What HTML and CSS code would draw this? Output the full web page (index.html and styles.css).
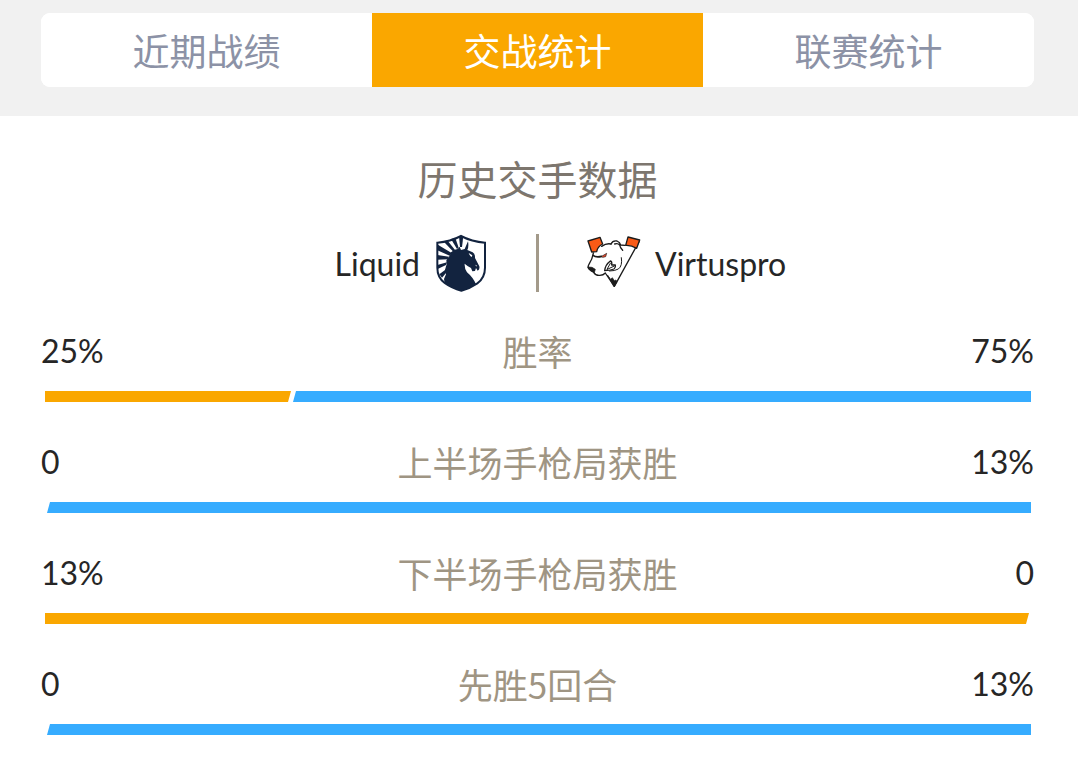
FILE: index.html
```html
<!DOCTYPE html>
<html lang="zh-CN">
<head>
    <meta charset="UTF-8">
    <meta name="viewport" content="width=device-width, initial-scale=1.0">
    <title>交战统计</title>
    <link rel="stylesheet" href="styles.css">
</head>
<body>

<nav class="header">
    <div class="tabs">
        <button class="tab" type="button">近期战绩</button>
        <button class="tab active" type="button">交战统计</button>
        <button class="tab" type="button">联赛统计</button>
    </div>
</nav>

<main class="content">
    <h1 class="title">历史交手数据</h1>

    <div class="teams">
        <div class="team home">
            <span>Liquid</span>
            <svg class="logo" viewBox="27 27 162 174" aria-hidden="true">
                <path d="M108 33 Q140 50 180 53 V128 Q180 158 157 175 Q135 190 109 197 Q81 190 59 174 Q37 157 37 128 V53 Q76 50 108 33Z" fill="#fff" stroke="#12233f" stroke-width="6"/>
                <g fill="#12233f">
                    <path d="M102 33 L115 33 L111 66 L105 66Z"/>
                    <path d="M78 42 L91 39 L101 68 L96 72Z"/>
                    <path d="M55 49 L68 47 L90 75 L85 80Z"/>
                    <path d="M37 58 L46 64 L80 84 L74 92 L37 76Z"/>
                    <path d="M37 90 L37 104 L68 103 L72 95Z"/>
                    <path d="M37 120 L38 132 L63 120 L66 112Z"/>
                    <path d="M43 148 L51 158 L65 142 L64 132Z"/>
                    <path d="M129 49 Q132 64 127 75 L143 82 Q151 87 150 99 L163 124 Q165 134 158 137 L153 129 L150 138 L142 139 L138 129 Q128 124 119 116 Q118 130 126 142 Q144 157 153 178 Q133 191 109 197 Q79 188 59 174 L57 162 L63 148 L60 134 L65 118 L64 106 L73 94 L78 82 L89 74 L98 72 L104 65 L108 75 L119 72Z"/>
                </g>
                <path d="M131 84 L142 91 L140 96 Q135 94 131 84Z" fill="#fff"/>
                <path d="M151 119 l4 2 -1 4z" fill="#fff"/>
            </svg>
        </div>
        <div class="divider"></div>
        <div class="team away">
            <svg class="logo" viewBox="36 27 162 174" aria-hidden="true">
                <g stroke="#1b1b1b" stroke-width="4" stroke-linejoin="round" stroke-linecap="round">
                    <path d="M55 81 L80 62 Q95 54 108 57 Q118 44 132 52 L152 60 L186 70 L118 183 L93 146 Q84 152 72 151 Q60 150 56 142 L41 131 Q37 126 43 116 Q52 103 55 81Z" fill="#fff" stroke="none"/>
                    <path d="M80 64 Q94 54 108 57 M55 84 Q52 103 43 116 Q37 125 41 131 L56 142 Q61 151 72 151 Q84 152 91 144 M192 50 L118 184 L93 147" fill="none"/>
                    <path d="M39 48 L75 37 L83 57 Q68 64 65 80 L50 81Z" fill="#f95a16"/>
                    <path d="M159 36 L194 45 L185 70 Q169 60 152 61Z" fill="#f95a16"/>
                    <path d="M108 57 Q113 46 126 48 Q135 52 137 60 L150 61 M119 57 Q129 54 134 60 Q135 68 143 76" fill="none"/>
                    <path d="M54 91 Q63 98 80 94" fill="none" stroke-width="5"/>
                    <path d="M80 94 L95 85 L92 95 L84 97Z" fill="#ef4a2c" stroke-width="2"/>
                    <path d="M139 98 Q143 123 130 132 Q120 138 103 138" fill="none" stroke-width="3"/>
                    <path d="M89 137 Q91 119 106 108 Q112 110 110 120 L121 120 Q123 127 117 132 Q104 137 89 137Z" fill="#fff"/>
                    <path d="M96 133 L106 115 M97 133 L118 123" fill="none" stroke-width="3"/>
                    <path d="M39 126 L51 127 L61 133 L58 143 L47 138Z" fill="#1b1b1b" stroke-width="2"/>
                    <path d="M98 151 L107 163 L112 158 L118 167 L123 165 L126 171 L118 185Z" fill="#1b1b1b" stroke-width="2"/>
                </g>
            </svg>
            <span>Virtuspro</span>
        </div>
    </div>

    <ul class="stats">
        <li class="stat">
            <div class="stat-text">
                <span class="value">25%</span>
                <span class="label">胜率</span>
                <span class="value right">75%</span>
            </div>
            <div class="bar">
                <div class="bar-left" style="width: 25%"></div>
                <div class="bar-right" style="width: 75%"></div>
            </div>
        </li>
        <li class="stat">
            <div class="stat-text">
                <span class="value">0</span>
                <span class="label">上半场手枪局获胜</span>
                <span class="value right">13%</span>
            </div>
            <div class="bar">
                <div class="bar-left" style="width: 0%"></div>
                <div class="bar-right" style="width: 100%"></div>
            </div>
        </li>
        <li class="stat">
            <div class="stat-text">
                <span class="value">13%</span>
                <span class="label">下半场手枪局获胜</span>
                <span class="value right">0</span>
            </div>
            <div class="bar">
                <div class="bar-left" style="width: 100%"></div>
                <div class="bar-right" style="width: 0%"></div>
            </div>
        </li>
        <li class="stat">
            <div class="stat-text">
                <span class="value">0</span>
                <span class="label">先胜5回合</span>
                <span class="value right">13%</span>
            </div>
            <div class="bar">
                <div class="bar-left" style="width: 0%"></div>
                <div class="bar-right" style="width: 100%"></div>
            </div>
        </li>
    </ul>
</main>

</body>
</html>
```
FILE: styles.css
```css
* {
    box-sizing: border-box;
}

body {
    margin: 0;
    background-color: #fff;
    color: #262626;
    font-family: Lato, "Noto Sans CJK SC", sans-serif;
    font-size: 32px;
}

.header {
    padding: 13px 44px 29px 41px;
    background-color: #f1f1f1;
}

.tabs {
    display: grid;
    grid-template-columns: repeat(3, 1fr);
    border-radius: 9px;
    overflow: hidden;
    background-color: #fff;
}

.tab {
    height: 74px;
    padding: 0;
    border: none;
    background-color: #fff;
    color: #8c92a6;
    font-family: "Noto Sans CJK SC", sans-serif;
    font-size: 37px;
    cursor: pointer;
}

.tab.active {
    background-color: #faa700;
    color: #fff;
}

.content {
    padding: 40px 44px 40px 41px;
}

.title {
    margin: 0 0 30px;
    color: #7d766e;
    font-size: 40px;
    font-weight: 400;
    line-height: 48px;
    text-align: center;
}

.teams {
    display: grid;
    grid-template-columns: 1fr 3px 1fr;
    column-gap: 48px;
    align-items: center;
}

.team {
    display: flex;
    align-items: center;
    gap: 14px;
}

.home {
    justify-content: flex-end;
}

.logo {
    width: 54px;
    height: 58px;
}

.divider {
    height: 58px;
    background-color: #a39a8a;
}

.stats {
    display: grid;
    gap: 40px;
    margin: 39px 0 0;
    padding: 0;
    list-style: none;
}

.stat-text {
    display: grid;
    grid-template-columns: 1fr auto 1fr;
    align-items: center;
    line-height: 40px;
}

.label {
    color: #9f9583;
    font-family: "Noto Sans CJK SC", sans-serif;
    font-size: 35px;
}

.right {
    text-align: right;
}

.bar {
    display: flex;
    gap: 2px;
    height: 11px;
    margin: 20px 3px 0 4px;
}

/* slanted edge where the two sides meet */
.bar-left {
    background-color: #faa700;
    clip-path: polygon(0 0, 100% 0, calc(100% - 3px) 100%, 0 100%);
}

.bar-right {
    background-color: #36acff;
    clip-path: polygon(3px 0, 100% 0, 100% 100%, 0 100%);
}
```
